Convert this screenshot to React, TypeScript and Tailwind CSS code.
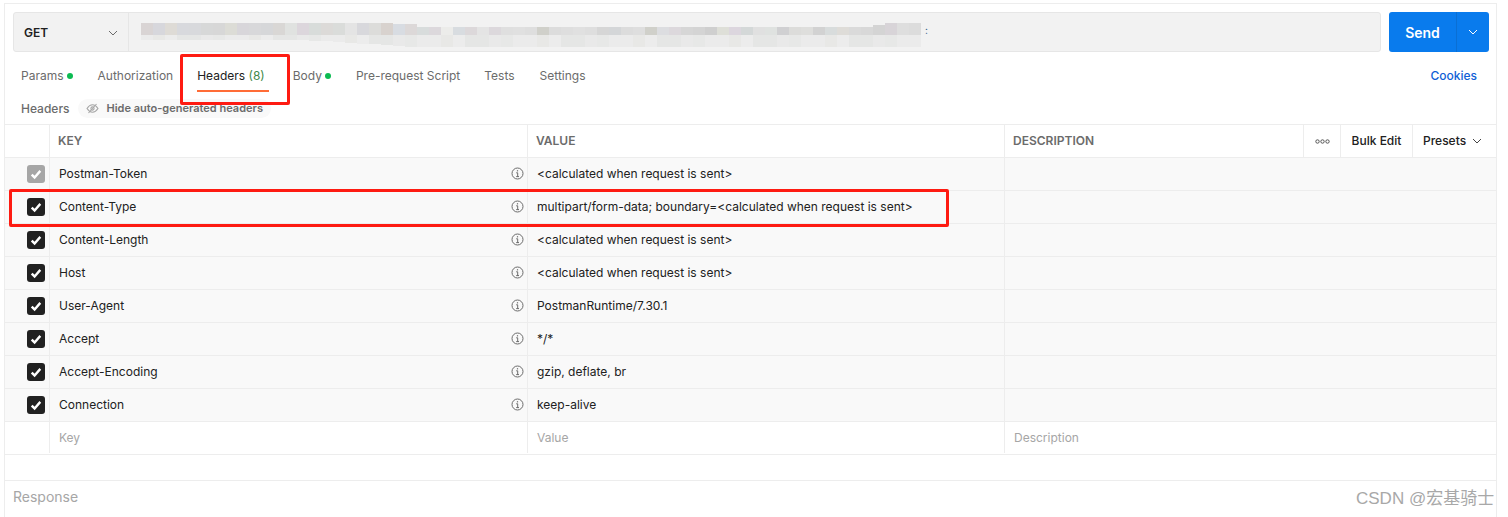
import React from "react";

const F = "font-['Inter','Liberation_Sans',sans-serif]";

function Dot() {
  return <span className="ml-[3px] inline-block h-[6px] w-[6px] rounded-full bg-[#0cbb52]" />;
}

function Check({ muted }: { muted?: boolean }) {
  return (
    <span className={`flex h-[18px] w-[18px] items-center justify-center rounded-[3px] ${muted ? "bg-[#a6a6a6]" : "bg-[#212121]"}`}>
      <svg width="14" height="14" viewBox="0 0 13 13" fill="none" stroke="white" strokeWidth="2.2">
        <path d="M2.5 7 L5.2 9.7 L10.5 3.6" />
      </svg>
    </span>
  );
}

function Info() {
  return (
    <svg width="13" height="13" viewBox="0 0 13 13" fill="none" stroke="#6b6b6b" strokeWidth="1" className="mb-[1px]">
      <circle cx="6.5" cy="6.5" r="5.5" />
      <path d="M5.2 5.8 H6.7 V9.6 M5.2 9.6 H8" />
      <path d="M6.5 3.2 V4.4" strokeWidth="1.2" />
    </svg>
  );
}

function Chevron({ color = "#6b6b6b", size = 10 }: { color?: string; size?: number }) {
  return (
    <svg width={size} height={size} viewBox="0 0 10 10" fill="none" stroke={color} strokeWidth="1">
      <path d="M1 3 L5 7 L9 3" />
    </svg>
  );
}

const topColors = [
  "#d9d4d4","#d7d7dc","#dedbd6","#d8d9dd","#d8d9dc","#d7d8d8","#d7d7d7","#dcdcd6","#d8d6da","#d8d8da","#d6d7d9","#d9d7d5","#e0e2e0",
  "#dcd6dc","#d8dcda","#dcdad8","#dadcda","#e4e4e4","#d8d8dc","#dcdcda","#d8d2ce","#d8dce2","#dcd8d8","#d8dcdc","#dcd8dc","#ececea",
  "#d8dce0","#dcd8da","#e4e4e4","#dcd8dc","#dfdfdf","#e0e0e0","#dedede","#d0d0ca","#dcdcdc","#dedede","#e0e0e0","#dedede","#d6d6d6",
  "#d4d6d8","#dcdcdc","#dedede","#d0d0ca","#dcdde0","#dcd8dc","#d6d6d6","#d4d4d4","#cfcfcf","#dedfd8","#dcd6de","#d4d8d8","#e0e0e0",
  "#dfe2e0","#d0d0d2","#dcdcda","#dededc","#d2d2d2","#d8dcdc","#dedcd8","#dadada","#d8d8d8","#d4d4d4","#d8d4d8","#dedede","#dcdcdc",
];
const lowShades = ["#ebebeb","#e7e8e7","#e9e9e9","#e5e6e5","#ececec","#e8e8e6"];

const Mosaic = () => {
  const cells: React.ReactNode[] = [];
  topColors.forEach((c, i) => {
    const x = i * 12;
    const abs = 141 + x;
    const topY = i < 21 ? 23 : i < 23 ? 24 : i < 61 ? 27 : i === 61 ? 25 : 23;
    const bottom = abs < 300 ? 40 : Math.min(47, Math.round(40 + ((abs - 300) / 110) * 7));
    cells.push(<rect key={"t" + i} x={x} y={topY - 13} width="12" height={35 - topY} fill={c} />);
    cells.push(<rect key={"b" + i} x={x} y={22} width="12" height={bottom - 35} fill={lowShades[(i * 5 + (i >> 2)) % 6]} />);
  });
  return (
    <svg width="800" height="38" viewBox="0 0 800 38" className="ml-3 shrink-0">
      {cells}
      <text x="784" y="21" fontSize="10" fill="#35608a">:</text>
    </svg>
  );
};

const rows = [
  ["Postman-Token", "<calculated when request is sent>", true],
  ["Content-Type", "multipart/form-data; boundary=<calculated when request is sent>"],
  ["Content-Length", "<calculated when request is sent>"],
  ["Host", "<calculated when request is sent>"],
  ["User-Agent", "PostmanRuntime/7.30.1"],
  ["Accept", "*/*"],
  ["Accept-Encoding", "gzip, deflate, br"],
  ["Connection", "keep-alive"],
] as [string, string, boolean?][];

export default function App() {
  return (
    <div className={`${F} relative h-[517px] w-[1508px] overflow-hidden bg-white text-[12px] text-[#212121]`}>
      <div className="ml-1 mt-[3px] flex h-[514px] w-[1493px] flex-col border-x border-t border-[#ededed]">
        {/* URL bar */}
        <div className="mt-2 flex h-10 shrink-0 pl-2 pr-[7px]">
          <div className="flex w-[1368px] overflow-hidden rounded-[3px] border border-[#e6e6e6] bg-[#f2f2f2]">
            <div className="flex w-[115px] shrink-0 items-center justify-between border-r border-[#e6e6e6] pl-[10px] pr-[10px] pt-[1px]">
              <span className="text-[12px] font-semibold">GET</span>
              <Chevron />
            </div>
            <Mosaic />
          </div>
          <div className="ml-2 flex w-[100px] overflow-hidden rounded-[3px] bg-[#097bed] text-white">
            <div className="flex w-[68px] items-center justify-center border-r border-[#0a6fd4] text-[14px] font-semibold">Send</div>
            <div className="flex flex-1 items-center justify-center"><Chevron color="#ffffff" /></div>
          </div>
        </div>
        {/* Tabs */}
        <div className="flex h-[47px] shrink-0 items-start pl-4 pr-[19px] pt-[15px] text-[#6b6b6b]">
          <span className="flex items-center">Params<Dot /></span>
          <span className="ml-[25px]">Authorization</span>
          <span className="relative ml-6 text-[#212121]">
            Headers <span className="text-[#3f8a4a]">(8)</span>
            <span className="absolute left-0 top-[23px] h-[2px] w-[72px] bg-[#ff6c37]" />
          </span>
          <span className="ml-7 flex items-center">Body<Dot /></span>
          <span className="ml-[25px]">Pre-request Script</span>
          <span className="ml-6">Tests</span>
          <span className="ml-[25px]">Settings</span>
          <span className="ml-auto font-medium text-[#0f5fd6]">Cookies</span>
        </div>
        {/* Sub header */}
        <div className="flex h-[25px] shrink-0 items-start pl-4">
          <span className="mt-[1px] font-medium text-[#6b6b6b]">Headers</span>
          <span className="ml-2 flex h-[19px] items-center rounded-full bg-[#f9f9f9] px-2 text-[11px] font-semibold text-[#6b6b6b]">
            <svg width="13" height="11" viewBox="0 0 13 11" fill="none" stroke="#a6a6a6" strokeWidth="1.1" className="mr-[8px]">
              <path d="M1 5.5 C3 2.5 5 1.8 6.5 1.8 C8 1.8 10 2.5 12 5.5 C10 8.5 8 9.2 6.5 9.2 C5 9.2 3 8.5 1 5.5 Z" />
              <circle cx="6.5" cy="5.5" r="1.6" />
              <path d="M2.5 10 L10.5 1" />
            </svg>
            Hide auto-generated headers
          </span>
        </div>
        {/* Table */}
        <div className="border-t border-[#ededed]">
          <div className="flex h-[33px] items-center border-b border-[#ededed] font-semibold text-[#6b6b6b]">
            <div className="h-full w-[45px] shrink-0 border-r border-[#ededed]" />
            <div className="flex h-full w-[478px] shrink-0 items-center border-r border-[#ededed] pl-2">KEY</div>
            <div className="flex h-full w-[477px] shrink-0 items-center border-r border-[#ededed] pl-2">VALUE</div>
            <div className="flex h-full flex-1 items-center pl-2">DESCRIPTION</div>
            <div className="flex h-full w-[37px] items-center justify-center border-l border-[#ededed]">
              <svg width="15" height="5" viewBox="0 0 15 5" fill="none" stroke="#555" strokeWidth="1">
                <circle cx="2.5" cy="2.5" r="1.7" /><circle cx="7.5" cy="2.5" r="1.7" /><circle cx="12.5" cy="2.5" r="1.7" />
              </svg>
            </div>
            <div className="flex h-full w-[72px] items-center justify-center border-l border-[#ededed] font-medium text-[#212121]">Bulk Edit</div>
            <div className="flex h-full w-[84px] items-center gap-[6px] border-l border-[#ededed] pl-[10px] font-medium text-[#212121]">Presets <Chevron color="#444" /></div>
          </div>
          {rows.map(([k, v, muted]) => (
            <div key={k} className="flex h-[33px] items-stretch border-b border-[#ededed] bg-[#f9f9f9]">
              <div className="flex w-[45px] shrink-0 items-center justify-center border-r border-[#ededed] pl-[18px]">
                <Check muted={muted} />
              </div>
              <div className="flex w-[478px] shrink-0 items-center justify-between border-r border-[#ededed] pl-[9px] pr-[3px]">
                <span>{k}</span>
                <Info />
              </div>
              <div className="flex w-[477px] shrink-0 items-center border-r border-[#ededed] pl-[9px]">{v}</div>
              <div className="flex-1" />
            </div>
          ))}
          <div className="flex h-[33px] border-b border-[#ededed] pb-[1px] text-[#a6a6a6]">
            <div className="w-[45px] shrink-0 border-r border-[#ededed]" />
            <div className="flex w-[478px] shrink-0 items-center border-r border-[#ededed] pl-[9px]">Key</div>
            <div className="flex w-[477px] shrink-0 items-center border-r border-[#ededed] pl-[9px]">Value</div>
            <div className="flex flex-1 items-center pl-[9px]">Description</div>
          </div>
        </div>
        {/* Response */}
        <div className="mt-[25px] flex-1 border-t border-[#ededed] pl-2 pt-[5px] text-[14px] text-[#a6a6a6]">Response</div>
      </div>
      {/* Annotations */}
      <div className="absolute left-[180px] top-[54px] h-[51px] w-[110px] rounded-[2px] border-[3px] border-[#fe1b12]" />
      <div className="absolute left-[9px] top-[189px] h-[38px] w-[940px] rounded-[2px] border-[3px] border-[#fe1b12]" />
      <div className="absolute left-[1356px] top-[490px] font-['Liberation_Sans','Noto_Sans_CJK_SC',sans-serif] text-[17px] leading-[18px] text-[#a8a8a8]">CSDN @宏基骑士</div>
    </div>
  );
}
